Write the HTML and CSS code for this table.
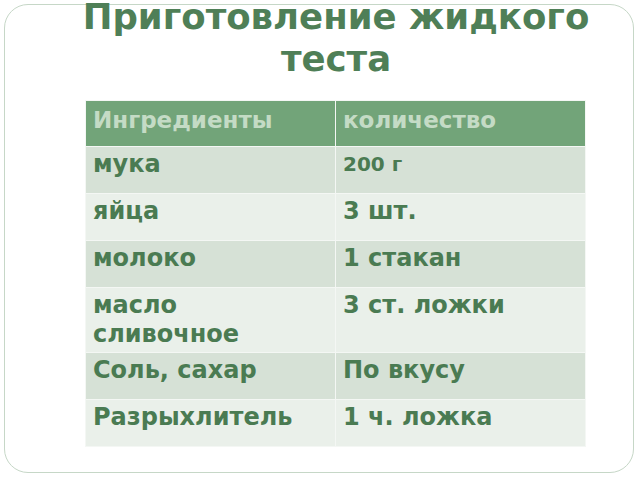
FILE: index.html
```html
<!DOCTYPE html>
<html lang="ru">
<head>
<meta charset="utf-8">
<link rel="stylesheet" href="styles.css">
</head>
<body>
<div class="frame">
  <h1 class="title">Приготовление жидкого<br>теста</h1>
  <table class="recipe">
    <tr class="head"><th class="c1">Ингредиенты</th><th class="c2">количество</th></tr>
    <tr class="odd"><td>мука</td><td class="small">200 г</td></tr>
    <tr class="even"><td>яйца</td><td>3 шт.</td></tr>
    <tr class="odd"><td>молоко</td><td>1 стакан</td></tr>
    <tr class="even tall"><td>масло<br>сливочное</td><td>3 ст. ложки</td></tr>
    <tr class="odd"><td>Соль, сахар</td><td>По вкусу</td></tr>
    <tr class="even"><td>Разрыхлитель</td><td>1 ч. ложка</td></tr>
  </table>
</div>
</body>
</html>
```
FILE: styles.css
```css
html, body {
  margin: 0;
  padding: 0;
  background: #ffffff;
}
body {
  font-family: "DejaVu Sans", sans-serif;
}
.frame {
  margin: 4px;
  width: 628px;
  height: 467px;
  border: 1px solid #c6d7c7;
  border-radius: 24px;
  box-sizing: content-box;
}
.title {
  margin: -9px 0 0 0;
  padding-left: 34px;
  font-size: 35.5px;
  line-height: 42px;
  font-weight: bold;
  color: #4f7f57;
  text-align: center;
}
.recipe {
  margin: 20px 0 0 80px;
  width: 501px;
  border-collapse: collapse;
  table-layout: fixed;
}
.recipe th, .recipe td {
  border: 1px solid #f4f7f4;
  vertical-align: top;
  text-align: left;
  padding: 3px 7px 0 7px;
  font-size: 24px;
  line-height: 29px;
  font-weight: bold;
  color: #4a7b52;
  white-space: nowrap;
}
.recipe .c1 { width: 235px; }
.recipe th {
  background: #72a479;
  color: #c4dbc5;
  font-weight: bold;
  font-size: 23px;
  height: 40px;
  padding-top: 5px;
}
.recipe tr.odd td { background: #d6e1d6; height: 43px; }
.recipe tr.even td { background: #eaf0ea; height: 43px; }
.recipe tr.tall td { height: 61px; }
.recipe td.small { font-size: 20px; }
```
